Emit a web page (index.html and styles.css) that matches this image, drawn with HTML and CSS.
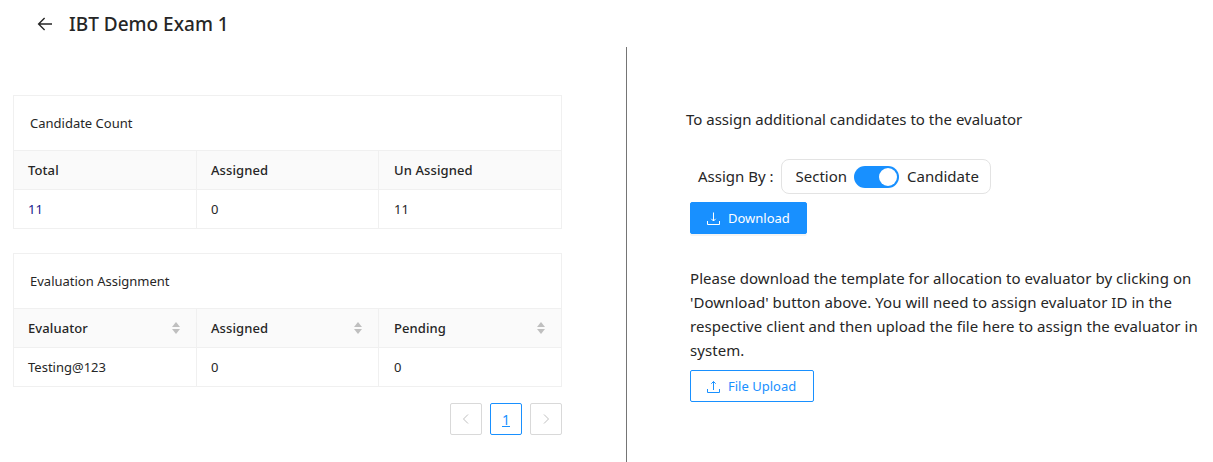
FILE: index.html
```html
<!DOCTYPE html>
<html lang="en">
<head>
<meta charset="utf-8">
<title>IBT Demo Exam 1</title>
<link rel="stylesheet" href="styles.css">
</head>
<body>
<header class="page-header">
  <svg class="back-icon" viewBox="0 0 16 16" width="16" height="16"><path d="M15 8H1.8M7.6 2 1.6 8l6 6" fill="none" stroke="#262626" stroke-width="1.4"/></svg>
  <h1 class="page-title">IBT Demo Exam 1</h1>
</header>
<main class="split">
  <section class="left">
    <div class="card">
      <div class="card-title">Candidate Count</div>
      <div class="row head">
        <div class="cell">Total</div>
        <div class="cell">Assigned</div>
        <div class="cell">Un Assigned</div>
      </div>
      <div class="row">
        <div class="cell link">11</div>
        <div class="cell">0</div>
        <div class="cell">11</div>
      </div>
    </div>
    <div class="card second">
      <div class="card-title">Evaluation Assignment</div>
      <div class="row head">
        <div class="cell">Evaluator<span class="sorter"><i class="up"></i><i class="down"></i></span></div>
        <div class="cell">Assigned<span class="sorter"><i class="up"></i><i class="down"></i></span></div>
        <div class="cell">Pending<span class="sorter"><i class="up"></i><i class="down"></i></span></div>
      </div>
      <div class="row">
        <div class="cell">Testing@123</div>
        <div class="cell">0</div>
        <div class="cell">0</div>
      </div>
    </div>
    <nav class="pager">
      <span class="page-btn"><svg viewBox="0 0 10 10" width="10" height="10"><path d="M7 .5 2.500 5 7 9.500" fill="none" stroke="#bfbfbf" stroke-width="1"/></svg></span>
      <span class="page-btn current">1</span>
      <span class="page-btn"><svg viewBox="0 0 10 10" width="10" height="10"><path d="M3 .5 7.500 5 3 9.500" fill="none" stroke="#bfbfbf" stroke-width="1"/></svg></span>
    </nav>
  </section>
  <section class="right">
    <p class="intro">To assign additional candidates to the evaluator</p>
    <div class="assign">
      <span class="lbl">Assign By :</span>
      <div class="toggle-box">
        <span class="lbl">Section</span>
        <span class="switch"><span class="knob"></span></span>
        <span class="lbl">Candidate</span>
      </div>
    </div>
    <button class="btn primary" type="button">
      <svg viewBox="0 0 13 13" width="13" height="13"><path d="M6.500 .5v8.500M4.300 6.800 6.500 9l2.200-2.200M.5 9v3.500h12V9" fill="none" stroke="currentColor" stroke-width="1"/></svg>
      Download
    </button>
    <p class="help">Please download the template for allocation to evaluator by clicking on 'Download' button above. You will need to assign evaluator ID in the respective client and then upload the file here to assign the evaluator in system.</p>
    <button class="btn outline" type="button">
      <svg viewBox="0 0 13 13" width="13" height="13"><path d="M6.500 10V1.500M4.300 3.700 6.500 1.500l2.200 2.200M.5 9v3.500h12V9" fill="none" stroke="currentColor" stroke-width="1"/></svg>
      File Upload
    </button>
  </section>
</main>
</body>
</html>
```
FILE: styles.css
```css
* { box-sizing: border-box; }
html, body { height: 100%; }
body {
  margin: 0;
  height: 462px;
  overflow: hidden;
  background: #fff;
  color: #262626;
  font-family: "Noto Sans", "Open Sans", sans-serif;
  font-size: 13px;
}
.page-header {
  height: 47px;
  display: flex;
  align-items: center;
  padding: 0 0 0 37px;
  gap: 16px;
}
.back-icon { flex: none; }
.page-title {
  margin: 0;
  font-size: 19px;
  font-weight: 500;
  line-height: 24px;
  color: #262626;
}
.split { display: flex; height: 415px; }
.left {
  width: 627px;
  padding: 48px 64px 0 13px;
  border-right: 1px solid #757575;
  flex: none;
}
.card { border: 1px solid #f0f0f0; width: 549px; }
.card.second { margin-top: 24px; }
.card-title {
  height: 55px;
  display: flex;
  align-items: center;
  padding-left: 16px;
  border-bottom: 1px solid #f0f0f0;
  font-size: 13px;
}
.row {
  display: grid;
  grid-template-columns: 183px 182px 1fr;
  height: 39px;
}
.head { background: #fafafa; font-weight: 500; height: 38px; letter-spacing: .1px; }
.row + .row { border-top: 1px solid #f0f0f0; height: 39px; }
.cell {
  display: flex;
  align-items: center;
  justify-content: space-between;
  padding: 0 14px;
  border-right: 1px solid #f0f0f0;
}
.cell:last-child { border-right: 0; padding-left: 15px; }
.link { color: #1a1a8c; }
.sorter { display: flex; flex-direction: column; gap: 2px; margin-right: 2px; }
.sorter i { display: block; width: 0; height: 0; border-left: 4px solid transparent; border-right: 4px solid transparent; }
.sorter .up { border-bottom: 5px solid #bfbfbf; }
.sorter .down { border-top: 5px solid #bfbfbf; }
.pager { display: flex; justify-content: flex-end; gap: 8px; margin-top: 16px; width: 549px; }
.page-btn {
  width: 32px;
  height: 32px;
  border: 1px solid #d9d9d9;
  border-radius: 2px;
  display: flex;
  align-items: center;
  justify-content: center;
}
.page-btn.current { border-color: #1890ff; color: #1890ff; text-decoration: underline; font-size: 14px; }
.right { flex: 1; padding: 0 0 0 59px; font-size: 15px; }
.intro { margin: 60px 0 0; line-height: 24px; }
.assign { display: flex; align-items: center; margin: 28px 0 0 12px; gap: 7px; }
.lbl { margin-bottom: 2px; }
.toggle-box {
  display: flex;
  align-items: center;
  gap: 7px;
  height: 35px;
  padding: 0 11px 0 14px;
  border: 1px solid #e3e3e3;
  border-radius: 8px;
}
.switch {
  display: block;
  width: 45px;
  height: 22px;
  border-radius: 11px;
  background: #1890ff;
  padding: 2px;
  margin-right: 1px;
}
.knob { display: block; width: 18px; height: 18px; border-radius: 50%; background: #fff; margin-left: 23px; }
.btn {
  display: flex;
  align-items: center;
  gap: 8px;
  font: inherit;
  font-size: 13px;
  height: 32px;
  margin-left: 4px;
  border-radius: 2px;
  padding: 0 9px 0 16px;
}
.btn.primary { margin-top: 8px; width: 117px; background: #1890ff; border: 1px solid #1890ff; color: #fff; box-shadow: 0 2px 0 rgba(0,0,0,.045); }
.btn.outline { width: 124px; background: #fff; border: 1px solid #1890ff; color: #1890ff; }
.help { margin: 32px 0 0 4px; width: 510px; line-height: 24px; letter-spacing: .05px; }
.help + .btn { margin-top: 8px; }
```
